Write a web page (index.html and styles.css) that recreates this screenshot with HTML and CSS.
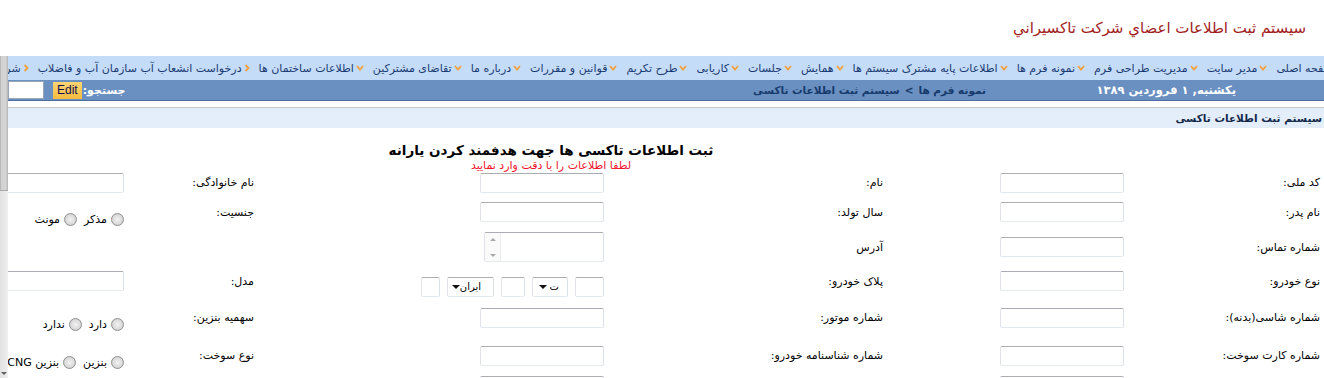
FILE: index.html
```html
<!DOCTYPE html>
<html lang="fa">
<head>
<meta charset="utf-8">
<title>سیستم ثبت اطلاعات تاکسی</title>
<link rel="stylesheet" href="styles.css">
</head>
<body>
<header class="top">
  <h1 class="site-title">سیستم ثبت اطلاعات اعضاي شركت تاكسيراني</h1>
</header>
<div class="frame">
  <div class="vscroll"><div class="vthumb"></div><div class="vtrack"></div><div class="varrow"></div></div>
  <div class="viewport">
    <nav class="menu">
      <ul class="menu-list">
        <li class="mi"><span class="mi-text">صفحه اصلی</span></li>
        <li class="mi"><svg class="chev" viewBox="0 0 8 6"><path d="M1 1L4 4.5L7 1"/></svg><span class="mi-text">مدیر سایت</span></li>
        <li class="mi"><svg class="chev" viewBox="0 0 8 6"><path d="M1 1L4 4.5L7 1"/></svg><span class="mi-text">مدیریت طراحی فرم</span></li>
        <li class="mi"><svg class="chev" viewBox="0 0 8 6"><path d="M1 1L4 4.5L7 1"/></svg><span class="mi-text">نمونه فرم ها</span></li>
        <li class="mi"><svg class="chev" viewBox="0 0 8 6"><path d="M1 1L4 4.5L7 1"/></svg><span class="mi-text">اطلاعات پایه مشترک سیستم ها</span></li>
        <li class="mi"><svg class="chev" viewBox="0 0 8 6"><path d="M1 1L4 4.5L7 1"/></svg><span class="mi-text">همایش</span></li>
        <li class="mi"><svg class="chev" viewBox="0 0 8 6"><path d="M1 1L4 4.5L7 1"/></svg><span class="mi-text">جلسات</span></li>
        <li class="mi"><svg class="chev" viewBox="0 0 8 6"><path d="M1 1L4 4.5L7 1"/></svg><span class="mi-text">کاریابی</span></li>
        <li class="mi"><svg class="chev" viewBox="0 0 8 6"><path d="M1 1L4 4.5L7 1"/></svg><span class="mi-text">طرح تکریم</span></li>
        <li class="mi"><svg class="chev" viewBox="0 0 8 6"><path d="M1 1L4 4.5L7 1"/></svg><span class="mi-text">قوانین و مقررات</span></li>
        <li class="mi"><svg class="chev" viewBox="0 0 8 6"><path d="M1 1L4 4.5L7 1"/></svg><span class="mi-text">درباره ما</span></li>
        <li class="mi"><svg class="chev" viewBox="0 0 8 6"><path d="M1 1L4 4.5L7 1"/></svg><span class="mi-text">تقاضای مشترکین</span></li>
        <li class="mi"><svg class="chev" viewBox="0 0 8 6"><path d="M1 1L4 4.5L7 1"/></svg><span class="mi-text">اطلاعات ساختمان ها</span></li>
        <li class="mi"><svg class="chev chev-side" viewBox="0 0 6 8"><path d="M1.5 1L4.5 4L1.5 7"/></svg><span class="mi-text">درخواست انشعاب آب سازمان آب و فاضلاب</span></li>
        <li class="mi"><svg class="chev chev-side" viewBox="0 0 6 8"><path d="M1.5 1L4.5 4L1.5 7"/></svg><span class="mi-text">شرکت ها</span></li>
      </ul>
    </nav>
    <div class="infobar">
      <span class="date">یکشنبه, ۱ فروردین ۱۳۸۹</span>
      <span class="crumbs"><span class="crumb">نمونه فرم ها</span><span class="crumb-sep">&gt;</span><span class="crumb">سیستم ثبت اطلاعات تاکسی</span></span>
      <span class="search"><span class="search-label">جستجو:</span><span class="edit-btn">Edit</span><span class="search-box"></span></span>
    </div>
    <div class="panel-title">سیستم ثبت اطلاعات تاکسی</div>
    <form class="form">
      <h2 class="form-title">ثبت اطلاعات تاکسی ها جهت هدفمند کردن یارانه</h2>
      <p class="form-hint">لطفا اطلاعات را با دقت وارد نمایید</p>
      <div class="grid">
        <!-- row 1 -->
        <div class="lbl">کد ملی:</div>
        <div class="fld"><span class="tb"></span></div>
        <div class="lbl">نام:</div>
        <div class="fld"><span class="tb"></span></div>
        <div class="lbl">نام خانوادگی:</div>
        <div class="fld"><span class="tb"></span></div>
        <!-- row 2 -->
        <div class="lbl">نام پدر:</div>
        <div class="fld"><span class="tb"></span></div>
        <div class="lbl">سال تولد:</div>
        <div class="fld"><span class="tb"></span></div>
        <div class="lbl">جنسیت:</div>
        <div class="fld"><span class="radios"><span class="rb"><i class="rd"></i>مذکر</span><span class="rb"><i class="rd"></i>مونث</span></span></div>
        <!-- row 3 -->
        <div class="lbl">شماره تماس:</div>
        <div class="fld"><span class="tb"></span></div>
        <div class="lbl">آدرس</div>
        <div class="fld"><span class="ta"><span class="ta-bar"><i class="ta-up"></i><i class="ta-down"></i></span></span></div>
        <div class="lbl"></div>
        <div class="fld"></div>
        <!-- row 4 -->
        <div class="lbl">نوع خودرو:</div>
        <div class="fld"><span class="tb"></span></div>
        <div class="lbl">پلاک خودرو:</div>
        <div class="fld"><span class="plate"><span class="tb tb-p1"></span><span class="sel sel-a">ت<i class="sel-arrow"></i></span><span class="tb tb-p2"></span><span class="sel sel-b">ایران<i class="sel-arrow"></i></span><span class="tb tb-p3"></span></span></div>
        <div class="lbl">مدل:</div>
        <div class="fld"><span class="tb"></span></div>
        <!-- row 5 -->
        <div class="lbl">شماره شاسی(بدنه):</div>
        <div class="fld"><span class="tb"></span></div>
        <div class="lbl">شماره موتور:</div>
        <div class="fld"><span class="tb"></span></div>
        <div class="lbl">سهمیه بنزین:</div>
        <div class="fld"><span class="radios"><span class="rb"><i class="rd"></i>دارد</span><span class="rb"><i class="rd"></i>ندارد</span></span></div>
        <!-- row 6 -->
        <div class="lbl">شماره کارت سوخت:</div>
        <div class="fld"><span class="tb"></span></div>
        <div class="lbl">شماره شناسنامه خودرو:</div>
        <div class="fld"><span class="tb"></span></div>
        <div class="lbl">نوع سوخت:</div>
        <div class="fld"><span class="radios"><span class="rb"><i class="rd"></i>بنزین</span><span class="rb"><i class="rd"></i>بنزین CNG</span></span></div>
        <!-- row 7 -->
        <div class="lbl"></div>
        <div class="fld fld-top"><span class="tb"></span></div>
        <div class="lbl"></div>
        <div class="fld fld-top"><span class="tb"></span></div>
        <div class="lbl"></div>
        <div class="fld"></div>
      </div>
    </form>
  </div>
</div>
</body>
</html>
```
FILE: styles.css
```css
html, body {
  margin: 0;
  padding: 0;
}
body {
  width: 1324px;
  height: 378px;
  overflow: hidden;
  background: #ffffff;
  font-family: "DejaVu Sans", sans-serif;
  font-size: 11px;
  color: #000;
}
.top {
  height: 56px;
  direction: rtl;
  display: flex;
  align-items: center;
}
.site-title {
  margin: 0 18px 0 0;
  font-size: 15px;
  font-weight: normal;
  color: #a11d22;
}
.frame {
  display: flex;
  height: 322px;
}
.vscroll {
  width: 8px;
  flex: none;
  display: flex;
  flex-direction: column;
  position: relative;
}
.vthumb {
  height: 134px;
  background: linear-gradient(to right, #b9b9b9 0, #b9b9b9 1px, #d0d0d0 1px, #d6d6d6 6px, #bcbcbc 7px, #bcbcbc 8px);
  border-bottom: 1px solid #a8a8a8;
}
.vtrack {
  flex: 1;
  background: linear-gradient(to right, #e2e2e2 0, #ebebeb 6px, #f2f2f2 8px);
}
.varrow {
  position: absolute;
  left: 1px;
  bottom: 3px;
  width: 0;
  height: 0;
  border-left: 3px solid transparent;
  border-right: 3px solid transparent;
  border-top: 3px solid #606060;
}
.viewport {
  flex: 1;
  min-width: 0;
  overflow: hidden;
  direction: rtl;
}
.menu {
  height: 24px;
  background: #c4dcf8;
  overflow: hidden;
}
.menu-list {
  list-style: none;
  margin: 0 -9px 0 0;
  padding: 0;
  height: 24px;
  display: flex;
  align-items: center;
  white-space: nowrap;
}
.mi {
  flex: none;
  display: flex;
  align-items: center;
  margin-left: 9px;
  color: #1a3a72;
  font-size: 11px;
}
.chev {
  width: 8px;
  height: 6px;
  margin-left: 2px;
  fill: none;
  stroke: #f3a03c;
  stroke-width: 1.8;
}
.chev-side {
  width: 6px;
  height: 8px;
}
.infobar {
  height: 20px;
  background: #6a8fc1;
  border-bottom: 1px solid #4c6f9f;
  display: flex;
  align-items: center;
  white-space: nowrap;
  font-weight: bold;
}
.date {
  color: #ffffff;
  margin-right: 88px;
  width: 126px;
  font-size: 11.5px;
}
.crumbs {
  margin-right: 124px;
  color: #163a6c;
  display: flex;
  gap: 5px;
  font-size: 10.5px;
}
.search {
  margin-right: auto;
  display: flex;
  align-items: center;
}
.search-label {
  color: #ffffff;
}
.edit-btn {
  margin-right: 1px;
  height: 17px;
  line-height: 17px;
  padding: 0 4px;
  background: linear-gradient(#fbd475, #f5bb3f);
  color: #101050;
  font-family: "Liberation Sans", sans-serif;
  font-weight: normal;
  font-size: 12px;
}
.search-box {
  margin-right: 9px;
  width: 34px;
  height: 16px;
  background: #fff;
  border: 1px solid #9aa6b6;
}
.panel-title {
  margin-top: 6px;
  height: 20px;
  line-height: 20px;
  border-top: 1px solid #c9c9c9;
  background: #e4eefb;
  padding-right: 2px;
  font-size: 10.5px;
  font-weight: bold;
  color: #14284a;
}
.form {
  width: 1546px;
  margin: 0;
}
.form-title {
  margin: 12px 0 0 0;
  height: 20px;
  line-height: 20px;
  font-size: 13.5px;
  font-weight: bold;
  text-align: center;
}
.form-hint {
  margin: 0;
  height: 11px;
  line-height: 11px;
  font-size: 11px;
  color: #f0142c;
  text-align: center;
}
.grid {
  display: grid;
  grid-template-columns: 197px 240px 280px 349px 131px 349px;
  grid-template-rows: 23px 36px 34px 34px 39px 37px 30px;
  align-items: center;
}
.lbl {
  padding-right: 4px;
  white-space: nowrap;
}
.fld {
  padding-right: 3px;
  display: flex;
}
.fld-top {
  align-self: start;
  padding-top: 2px;
}
.tb {
  display: block;
  width: 122px;
  height: 18px;
  background: #fff;
  border: 1px solid;
  border-color: #abadb3 #dbdfe6 #e3e9ef #e2e3ea;
  border-radius: 2px;
}
.ta {
  display: flex;
  width: 118px;
  height: 28px;
  border: 1px solid;
  border-color: #abadb3 #dbdfe6 #e3e9ef #e2e3ea;
  border-radius: 2px;
  justify-content: flex-end;
}
.ta-bar {
  width: 16px;
  border-right: 1px solid #ececec;
  background: #fafafa;
  display: flex;
  flex-direction: column;
  align-items: center;
  justify-content: space-between;
  padding: 5px 0 4px;
  box-sizing: border-box;
}
.ta-up, .ta-down {
  width: 0;
  height: 0;
  border-left: 3px solid transparent;
  border-right: 3px solid transparent;
}
.ta-up { border-bottom: 3px solid #a8a8a8; }
.ta-down { border-top: 3px solid #a8a8a8; }
.plate {
  display: flex;
  gap: 7px;
  padding-top: 11px;
}
.tb-p1 { width: 27px; }
.tb-p2 { width: 22px; }
.tb-p3 { width: 17px; }
.sel {
  display: flex;
  align-items: center;
  justify-content: space-between;
  height: 18px;
  background: #fff;
  border: 1px solid;
  border-color: #abadb3 #dbdfe6 #e3e9ef #e2e3ea;
  border-radius: 2px;
  padding: 0 8px 0 6px;
  box-sizing: content-box;
  font-size: 10px;
}
.sel-a { width: 20px; }
.sel-b { width: 27px; padding-right: 12px; padding-left: 6px; }
.sel-arrow {
  width: 0;
  height: 0;
  border-left: 4px solid transparent;
  border-right: 4px solid transparent;
  border-top: 4px solid #111;
}
.radios {
  display: flex;
  align-items: center;
  padding-top: 14px;
}
.rb {
  display: flex;
  align-items: center;
  margin-left: 7px;
  white-space: nowrap;
}
.rd {
  display: block;
  width: 11px;
  height: 11px;
  border-radius: 50%;
  border: 1px solid #8e8f8f;
  background: radial-gradient(circle at 50% 50%, #f2f2f2 0, #dcdcdc 55%, #c4c4c4 100%);
  margin-left: 4px;
}
```
